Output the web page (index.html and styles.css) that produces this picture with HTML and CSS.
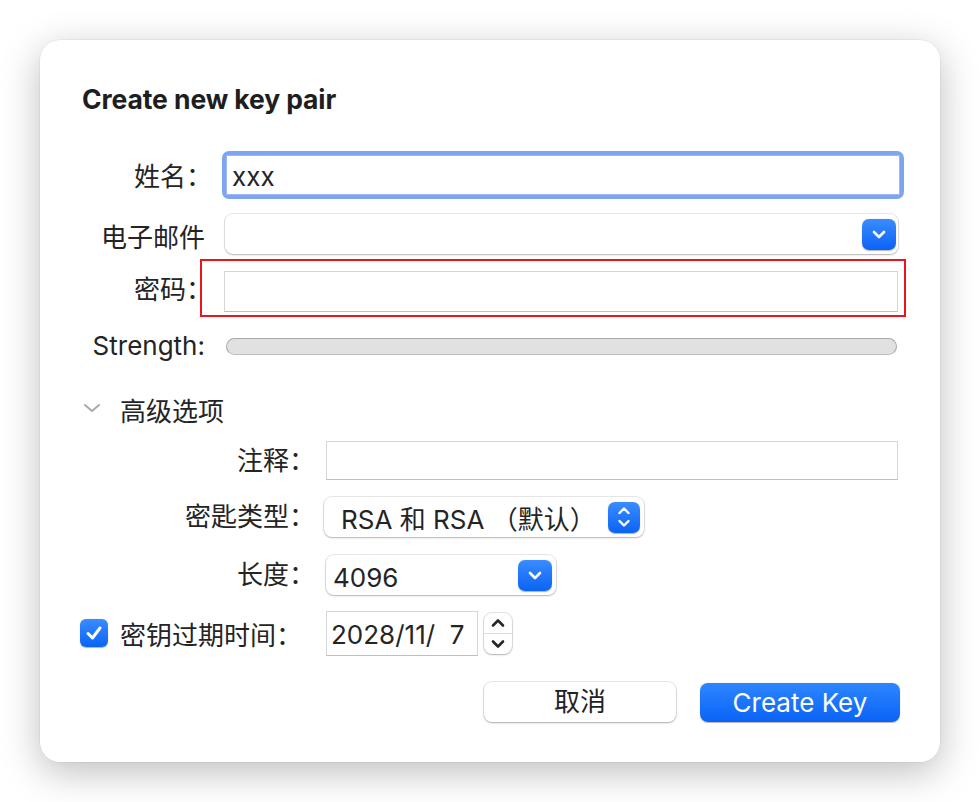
FILE: index.html
```html
<!DOCTYPE html>
<html lang="zh">
<head>
<meta charset="utf-8">
<title>Create new key pair</title>
<link rel="stylesheet" href="styles.css">
</head>
<body>
<div class="dialog">
  <h1 class="title">Create new key pair</h1>

  <div class="row row-name">
    <div class="label label-name">姓名：</div>
    <div class="focus-ring"><div class="field field-focus">xxx</div></div>
  </div>

  <div class="row row-email">
    <div class="label label-tight label-email">电子邮件</div>
    <div class="combo combo-email">
      <span class="blue-btn">
        <svg width="14" height="9" viewBox="0 0 14 9"><path d="M2 2 L7 7 L12 2" fill="none" stroke="#fff" stroke-width="2.6" stroke-linecap="round" stroke-linejoin="round"/></svg>
      </span>
    </div>
  </div>

  <div class="row row-pass">
    <div class="label">密码：</div>
    <div class="field field-pass"></div>
    <div class="highlight"></div>
  </div>

  <div class="row row-strength">
    <div class="label label-tight">Strength:</div>
    <div class="strength"></div>
  </div>

  <div class="row row-adv">
    <svg class="disclosure" width="18" height="10" viewBox="0 0 18 10"><path d="M2 2 L9 8 L16 2" fill="none" stroke="#a9a9a9" stroke-width="2" stroke-linecap="round" stroke-linejoin="round"/></svg>
    <span class="adv-text">高级选项</span>
  </div>

  <div class="row row-comment">
    <div class="label label-adv">注释：</div>
    <div class="field field-comment"></div>
  </div>

  <div class="row row-type">
    <div class="label label-adv">密匙类型：</div>
    <div class="combo combo-type">
      <span class="combo-text">RSA 和 RSA （默认）</span>
      <span class="blue-btn blue-btn-step">
        <svg width="14" height="24" viewBox="0 0 14 24"><path d="M2.5 8 L7 3.5 L11.5 8" fill="none" stroke="#fff" stroke-width="2.4" stroke-linecap="round" stroke-linejoin="round"/><path d="M2.5 16 L7 20.5 L11.5 16" fill="none" stroke="#fff" stroke-width="2.4" stroke-linecap="round" stroke-linejoin="round"/></svg>
      </span>
    </div>
  </div>

  <div class="row row-length">
    <div class="label label-adv">长度：</div>
    <div class="combo combo-length">
      <span class="combo-text combo-text-len">4096</span>
      <span class="blue-btn">
        <svg width="14" height="9" viewBox="0 0 14 9"><path d="M2 2 L7 7 L12 2" fill="none" stroke="#fff" stroke-width="2.6" stroke-linecap="round" stroke-linejoin="round"/></svg>
      </span>
    </div>
  </div>

  <div class="row row-expiry">
    <div class="check-label">
      <span class="checkbox">
        <svg width="20" height="18" viewBox="0 0 20 18"><path d="M4 9.5 L8.5 14 L16 4" fill="none" stroke="#fff" stroke-width="3" stroke-linecap="round" stroke-linejoin="round"/></svg>
      </span>
      <span class="check-text">密钥过期时间：</span>
    </div>
    <div class="field field-date">2028/11/&nbsp;&nbsp;7</div>
    <div class="stepper">
      <span class="step-half">
        <svg width="16" height="10" viewBox="0 0 16 10"><path d="M3 7.5 L8 2.5 L13 7.5" fill="none" stroke="#262626" stroke-width="2.6" stroke-linecap="round" stroke-linejoin="round"/></svg>
      </span>
      <span class="step-half step-bottom">
        <svg width="16" height="10" viewBox="0 0 16 10"><path d="M3 2.5 L8 7.5 L13 2.5" fill="none" stroke="#262626" stroke-width="2.6" stroke-linecap="round" stroke-linejoin="round"/></svg>
      </span>
    </div>
  </div>

  <div class="row row-buttons">
    <button class="btn btn-cancel">取消</button>
    <button class="btn btn-primary">Create Key</button>
  </div>
</div>
</body>
</html>
```

FILE: styles.css
```css
html, body {
  margin: 0;
  padding: 0;
  background: #ffffff;
}

body {
  font-family: "Inter", "Noto Sans CJK SC", sans-serif;
  color: #242424;
  font-size: 26px;
}

.dialog {
  margin: 40px;
  width: 900px;
  height: 722px;
  box-sizing: border-box;
  padding: 40px 36px 0 42px;
  background: #ffffff;
  border-radius: 20px;
  box-shadow: 0 0 0 0.5px rgba(0, 0, 0, 0.08), 0 10px 38px rgba(0, 0, 0, 0.26);
}

.title {
  margin: 0;
  height: 38px;
  line-height: 38px;
  font-size: 26.5px;
  font-weight: 700;
  color: #1e1e1e;
  letter-spacing: -0.1px;
}

.row {
  display: flex;
  align-items: center;
  position: relative;
}

.label {
  flex: none;
  width: 130px;
  text-align: right;
  white-space: nowrap;
  line-height: 32px;
}

.label-name {
  margin-top: 4px;
}

.label-email {
  margin-top: 8px;
}

.label-tight {
  width: 123px;
  padding-right: 7px;
}

.label-adv {
  width: 233px;
}

/* name */
.row-name {
  margin-top: 33px;
  height: 48px;
}

.focus-ring {
  margin-left: 10px;
  width: 682px;
  height: 48px;
  box-sizing: border-box;
  padding: 4px;
  background: #7fa5f2;
  border-radius: 7px;
}

.field {
  box-sizing: border-box;
  background: #ffffff;
  border: 1px solid #d6d6d6;
  border-bottom-color: #bdbdbd;
  line-height: 38px;
  white-space: nowrap;
}

.field-focus {
  height: 40px;
  border-color: #9db7ef;
  padding: 3px 0 0 5px;
  line-height: 36px;
}

/* email */
.row-email {
  margin-top: 15px;
  height: 40px;
}

.combo {
  display: flex;
  align-items: center;
  justify-content: space-between;
  box-sizing: border-box;
  height: 40px;
  background: #ffffff;
  border-radius: 8px;
  box-shadow: 0 0 0 1px rgba(0, 0, 0, 0.09), 0 1px 2px rgba(0, 0, 0, 0.22);
}

.combo-email {
  margin-left: 13px;
  width: 673px;
  justify-content: flex-end;
  padding-right: 2px;
}

.blue-btn {
  display: flex;
  align-items: center;
  justify-content: center;
  width: 34px;
  height: 31px;
  border-radius: 7px;
  background: linear-gradient(#3a8cff, #0b63f5);
  box-shadow: 0 0.5px 1px rgba(0, 0, 40, 0.3);
}

/* password */
.row-pass {
  margin-top: 5px;
  height: 58px;
}

.row-pass .label {
  margin-top: 4px;
}

.field-pass {
  margin-left: 12px;
  margin-top: 6px;
  width: 674px;
  height: 41px;
}

.highlight {
  position: absolute;
  left: 118px;
  top: 0;
  width: 706px;
  height: 58px;
  box-sizing: border-box;
  border: 2px solid #e8151c;
  pointer-events: none;
}

/* strength */
.row-strength {
  margin-top: 13px;
  height: 32px;
}

.strength {
  margin-left: 14px;
  width: 671px;
  height: 17px;
  box-sizing: border-box;
  border-radius: 9px;
  background: #e1e1e1;
  border: 1px solid #a9a9a9;
  border-bottom-color: #bdbdbd;
}

/* advanced */
.row-adv {
  margin-top: 28px;
  height: 38px;
}

.disclosure {
  margin-left: 1px;
  margin-top: -2px;
}

.adv-text {
  margin-left: 19px;
}

.row-comment {
  margin-top: 13px;
  height: 39px;
}

.field-comment {
  margin-left: 11px;
  width: 572px;
  height: 39px;
}

.row-type {
  margin-top: 17px;
  height: 40px;
}

.combo-type {
  margin-left: 9px;
  width: 320px;
  padding: 0 4px 0 17px;
}

.blue-btn-step {
  width: 32px;
  height: 31px;
}

.combo-text {
  white-space: nowrap;
}

.row-length {
  margin-top: 18px;
  height: 40px;
}

.combo-length {
  margin-left: 11px;
  width: 230px;
  padding: 0 4px 0 7px;
}

.combo-text-len {
  margin-top: 4px;
}

/* expiry */
.row-expiry {
  margin-top: 16px;
  height: 45px;
}

.check-label {
  display: flex;
  align-items: center;
  margin-left: -2px;
  width: 235px;
  flex: none;
}

.checkbox {
  display: flex;
  align-items: center;
  justify-content: center;
  width: 28px;
  height: 28px;
  border-radius: 6px;
  background: linear-gradient(#3a8cff, #0b63f5);
  box-shadow: 0 0.5px 1px rgba(0, 0, 40, 0.3);
  margin-top: -2px;
}

.check-text {
  margin-left: 12px;
}

.field-date {
  margin-left: 11px;
  width: 152px;
  height: 45px;
  line-height: 45px;
  padding-left: 4px;
}

.stepper {
  margin-left: 6px;
  width: 28px;
  height: 41px;
  display: flex;
  flex-direction: column;
  box-sizing: border-box;
  border-radius: 8px;
  background: #ffffff;
  box-shadow: 0 0 0 1px rgba(0, 0, 0, 0.1), 0 1px 2px rgba(0, 0, 0, 0.22);
}

.step-half {
  flex: 1;
  display: flex;
  align-items: center;
  justify-content: center;
}

.step-bottom {
  border-top: 1px solid #dcdcdc;
}

/* buttons */
.row-buttons {
  margin-top: 26px;
  height: 40px;
  justify-content: flex-end;
  padding-right: 4px;
  gap: 24px;
}

.btn {
  font-family: "Inter", "Noto Sans CJK SC", sans-serif;
  font-size: 26px;
  height: 40px;
  border: none;
  border-radius: 8px;
  padding: 0;
  line-height: 40px;
}

.btn-cancel {
  width: 192px;
  background: #ffffff;
  color: #222;
  box-shadow: 0 0 0 1px rgba(0, 0, 0, 0.09), 0 1px 2px rgba(0, 0, 0, 0.25);
}

.btn-primary {
  width: 200px;
  height: 39px;
  color: #ffffff;
  background: linear-gradient(#2d86ff, #0a63f6);
  box-shadow: 0 0.5px 1px rgba(0, 0, 40, 0.3);
}
```
